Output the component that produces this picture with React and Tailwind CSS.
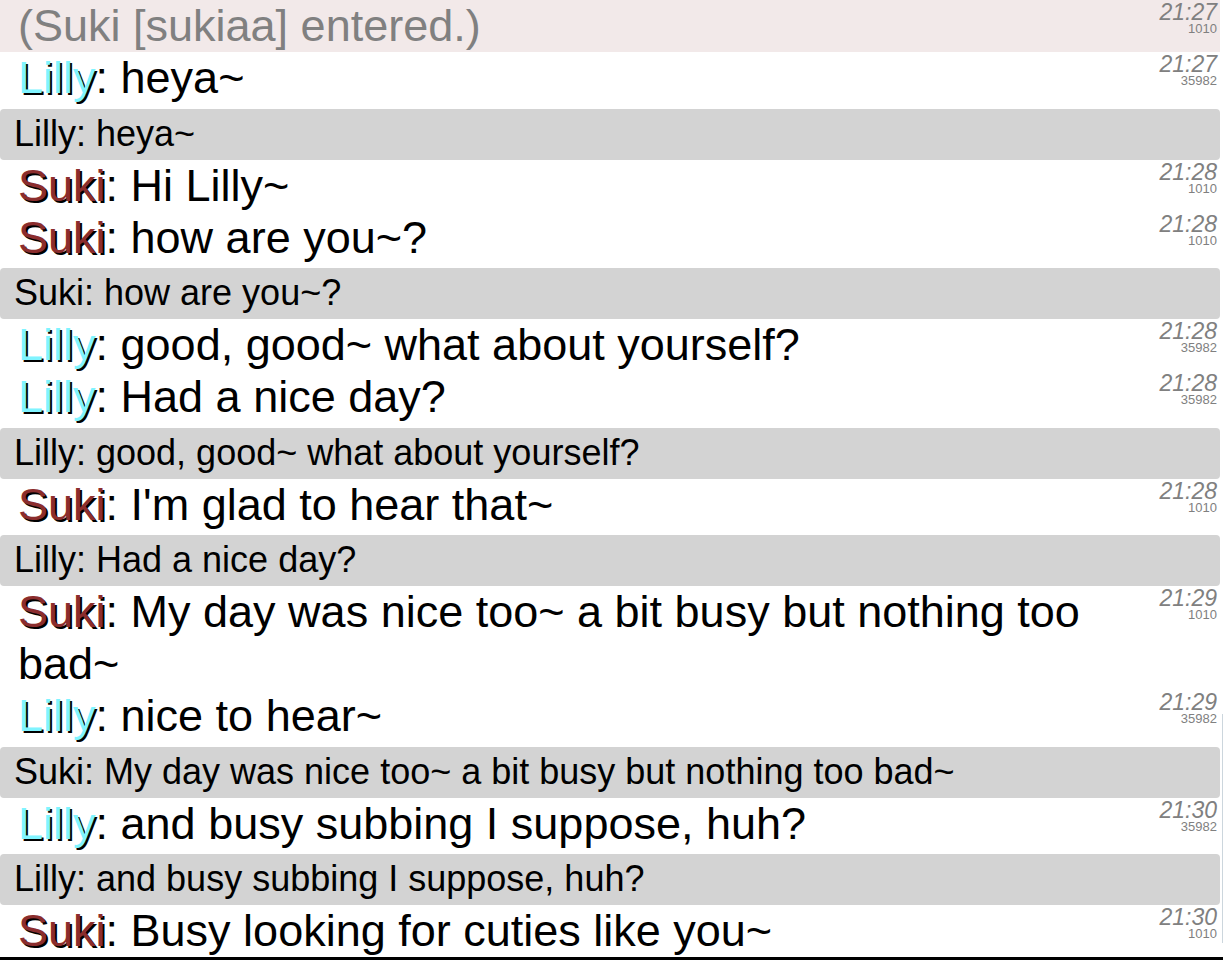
const NAME_STYLES = {
  Lilly: "text-[#80f4ff]",
  Suki: "text-[#8b2d2d]",
};

const GROUPS = [
  {
    messages: [{ name: "Lilly", text: "heya~", time: "21:27", id: "35982" }],
    quote: "Lilly: heya~",
  },
  {
    messages: [
      { name: "Suki", text: "Hi Lilly~", time: "21:28", id: "1010" },
      { name: "Suki", text: "how are you~?", time: "21:28", id: "1010" },
    ],
    quote: "Suki: how are you~?",
  },
  {
    messages: [
      { name: "Lilly", text: "good, good~ what about yourself?", time: "21:28", id: "35982" },
      { name: "Lilly", text: "Had a nice day?", time: "21:28", id: "35982" },
    ],
    quote: "Lilly: good, good~ what about yourself?",
  },
  {
    messages: [{ name: "Suki", text: "I'm glad to hear that~", time: "21:28", id: "1010" }],
    quote: "Lilly: Had a nice day?",
  },
  {
    messages: [
      { name: "Suki", text: "My day was nice too~ a bit busy but nothing too bad~", time: "21:29", id: "1010" },
      { name: "Lilly", text: "nice to hear~", time: "21:29", id: "35982" },
    ],
    quote: "Suki: My day was nice too~ a bit busy but nothing too bad~",
  },
  {
    messages: [{ name: "Lilly", text: "and busy subbing I suppose, huh?", time: "21:30", id: "35982" }],
    quote: "Lilly: and busy subbing I suppose, huh?",
  },
  {
    messages: [{ name: "Suki", text: "Busy looking for cuties like you~", time: "21:30", id: "1010" }],
  },
];

function Stamp({ time, id }) {
  return (
    <div className="flex shrink-0 flex-col items-end pt-px text-[#808080]">
      <time className="text-[23px] leading-[22px] italic">{time}</time>
      <span className="text-[13px] leading-3">{id}</span>
    </div>
  );
}

function Row({ time, id, children }) {
  return (
    <div className="flex items-start justify-between gap-10 pr-[3px] pl-[18px]">
      <p className="min-w-0 text-[45px] leading-[52px]">{children}</p>
      <Stamp time={time} id={id} />
    </div>
  );
}

function Message({ name, text, time, id }) {
  return (
    <Row time={time} id={id}>
      <span className={`${NAME_STYLES[name]} [text-shadow:2px_2px_0_#000]`}>{name}</span>: {text}
    </Row>
  );
}

export default function App() {
  return (
    <main className="relative bg-white font-['Liberation_Sans',Arial,sans-serif] text-black">
      <div className="pr-[3px]">
        <div className="bg-[#f2e9e9] text-[#808080]">
          <Row time="21:27" id="1010">(Suki [sukiaa] entered.)</Row>
        </div>
        <div>
          {GROUPS.map((group, i) => (
            <section key={i} className="flex flex-col odd:gap-[5px] even:gap-1">
              <div>
                {group.messages.map((message, j) => (
                  <Message key={j} {...message} />
                ))}
              </div>
              {group.quote && (
                <p className="rounded-[4px] bg-[#d3d3d3] px-[14px] pb-[2px] text-[36px] leading-[49px]">{group.quote}</p>
              )}
            </section>
          ))}
        </div>
      </div>
      <div className="h-[3px] bg-black" />
      <div className="absolute right-0 bottom-[17px] h-[229px] w-px bg-[#ccd6dd]" />
    </main>
  );
}
